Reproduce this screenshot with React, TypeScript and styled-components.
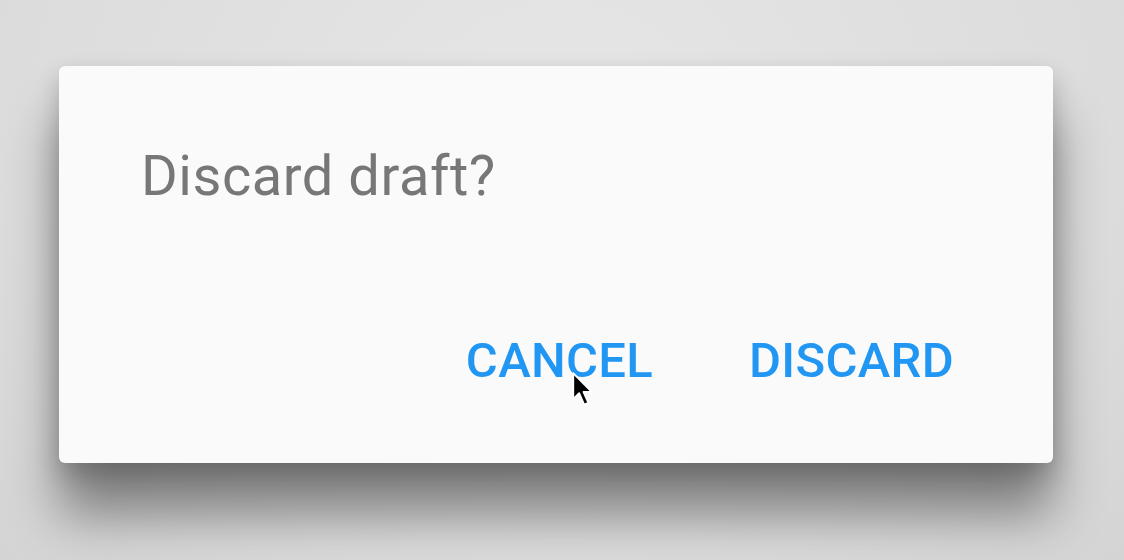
import React from 'react';
import styled, { createGlobalStyle } from 'styled-components';

const GlobalStyle = createGlobalStyle`
  html, body {
    margin: 0;
    padding: 0;
    background: #e0e0e0;
  }
  body {
    font-family: Roboto, "Noto Sans", "Liberation Sans", sans-serif;
  }
`;

const Backdrop = styled.div`
  width: 1124px;
  height: 560px;
  overflow: hidden;
  background: radial-gradient(ellipse at 50% 20%, #e6e6e6 0%, #dcdcdc 70%, #d4d4d4 100%);
  padding: 66px 0 0 59px;
  box-sizing: border-box;
`;

const Dialog = styled.div`
  width: 994px;
  height: 397px;
  background: #fafafa;
  border-radius: 6px;
  box-shadow: 0 52px 52px rgba(0, 0, 0, 0.42), 0 10px 24px rgba(0, 0, 0, 0.2);
  box-sizing: border-box;
  padding: 82px 99px 0 82px;
  display: flex;
  flex-direction: column;
`;

const Title = styled.div`
  font-size: 56px;
  color: #777;
  line-height: 1;
  letter-spacing: 0.55px;
`;

const Actions = styled.div`
  margin-top: 132px;
  display: flex;
  justify-content: flex-end;
  gap: 96px;
`;

const ActionButton = styled.button`
  position: relative;
  border: none;
  background: transparent;
  padding: 0;
  font-family: inherit;
  font-weight: 500;
  font-size: 49px;
  line-height: 1;
  color: #2196f3;
  letter-spacing: 0.3px;
  cursor: pointer;
`;

const Pointer = styled.svg`
  position: absolute;
  left: 105px;
  top: 35px;
`;

const App = () => {
  return (
    <>
      <GlobalStyle />
      <Backdrop>
        <Dialog>
          <Title>Discard draft?</Title>
          <Actions>
            <ActionButton>
              CANCEL
              <Pointer width="24" height="37" viewBox="0 0 22 34">
                <path d="M2 2 L2 26 L7.5 20.5 L12 31 L16 29.3 L11.5 19.2 L19 19.2 Z" fill="#000" stroke="#fff" strokeWidth="1.8" strokeLinejoin="round" />
              </Pointer>
            </ActionButton>
            <ActionButton>DISCARD</ActionButton>
          </Actions>
        </Dialog>
      </Backdrop>
    </>
  );
};

export default App;
